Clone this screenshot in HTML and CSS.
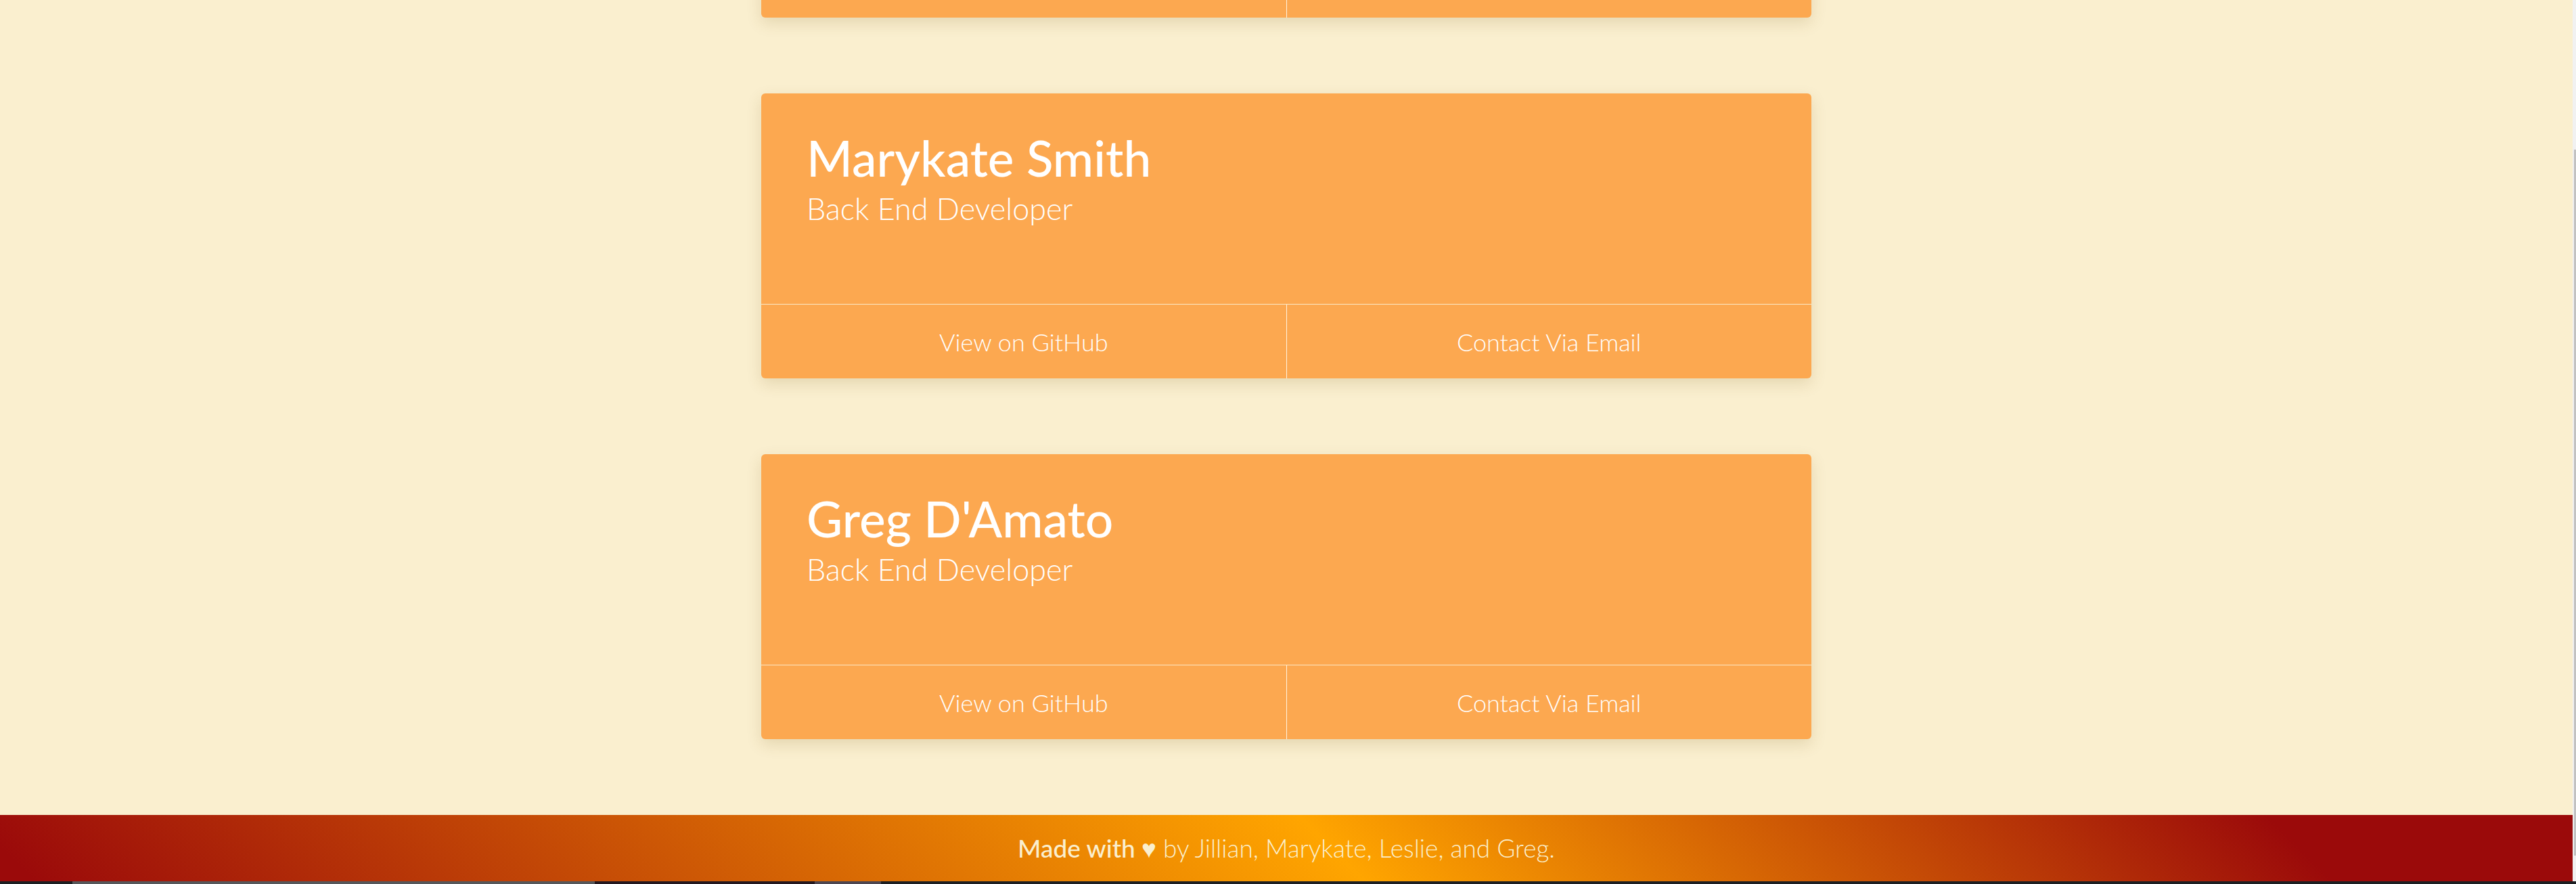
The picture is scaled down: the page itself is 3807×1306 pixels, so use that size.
FILE: index.html
```html
<!DOCTYPE html>
<html lang="en">
<head>
<meta charset="utf-8">
<title>Team</title>
<link rel="stylesheet" href="styles.css">
</head>
<body>
  <div class="viewport">
    <div class="page">
      <main class="cards">
        <section class="card">
          <div class="card-body">
            <h2 class="name">Leslie Example</h2>
            <p class="role">Front End Developer</p>
          </div>
          <div class="card-actions">
            <a class="action" href="#">View on GitHub</a>
            <a class="action" href="#">Contact Via Email</a>
          </div>
        </section>
        <section class="card">
          <div class="card-body">
            <h2 class="name">Marykate Smith</h2>
            <p class="role">Back End Developer</p>
          </div>
          <div class="card-actions">
            <a class="action" href="#">View on GitHub</a>
            <a class="action" href="#">Contact Via Email</a>
          </div>
        </section>
        <section class="card">
          <div class="card-body">
            <h2 class="name">Greg D'Amato</h2>
            <p class="role">Back End Developer</p>
          </div>
          <div class="card-actions">
            <a class="action" href="#">View on GitHub</a>
            <a class="action" href="#">Contact Via Email</a>
          </div>
        </section>
      </main>
      <footer class="footer">
        <p class="footer-text"><strong class="made">Made with ♥</strong> by Jillian, Marykate, Leslie, and Greg.</p>
      </footer>
    </div>
    <div class="scrollbar"><div class="thumb"></div></div>
  </div>
  <div class="taskbar">
    <span class="seg seg-a"></span>
    <span class="seg seg-gap"></span>
    <span class="seg seg-b"></span>
    <span class="seg seg-rest"></span>
  </div>
</body>
</html>
```
FILE: styles.css
```css
* { box-sizing: border-box; }
html, body { margin: 0; padding: 0; }
body {
  background: #faefcf;
  font-family: "Lato", "Open Sans", sans-serif;
  overflow: hidden;
  height: 1306px;
}
.viewport {
  display: flex;
  height: 1302px;
  overflow: hidden;
}
.page {
  flex: 1;
  display: flex;
  flex-direction: column;
  overflow: hidden;
}
.cards {
  display: flex;
  flex-direction: column;
  align-items: center;
  gap: 112px;
  margin-top: -395px;
  padding-bottom: 112px;
}
.card {
  width: 1552px;
  height: 421px;
  background: #fca850;
  border-radius: 6px;
  box-shadow: 0 8px 22px rgba(120, 90, 20, 0.16);
  display: flex;
  flex-direction: column;
  overflow: hidden;
}
.card-body {
  height: 311px;
  padding: 55px 67px 0;
  color: #fff;
}
.name {
  margin: 0;
  font-size: 73px;
  line-height: 80px;
  font-weight: 500;
}
.role {
  margin: 13px 0 0;
  font-size: 45px;
  line-height: 45px;
  font-weight: 300;
}
.card-actions {
  flex: 1;
  display: flex;
  border-top: 1px solid #fbe8c6;
}
.action {
  flex: 1;
  display: flex;
  align-items: center;
  justify-content: center;
  color: #fff;
  text-decoration: none;
  font-size: 36px;
  font-weight: 300;
  padding-top: 1px;
}
.action + .action {
  border-left: 1px solid #fff3e0;
}
.footer {
  height: 98px;
  flex-shrink: 0;
  background: linear-gradient(45deg, #9b0a0a 1.3%, #ffa500 51.7%, #9b0a0a 88.4%);
  display: flex;
  align-items: center;
  justify-content: center;
}
.footer-text {
  margin: 0;
  color: #faefcf;
  font-size: 37px;
  font-weight: 300;
}
.made { font-weight: 500; }
.scrollbar {
  width: 5px;
  flex-shrink: 0;
  background: #f1f1f1;
  padding-top: 221px;
  padding-bottom: 38px;
  display: flex;
  justify-content: flex-end;
}
.thumb {
  width: 3px;
  height: 100%;
  background: #c1c1c1;
}
.taskbar {
  height: 4px;
  display: flex;
  background: #1d1f22;
}
.seg { display: block; height: 100%; }
.seg-a { width: 107px; }
.seg-gap { width: 772px; background: #56575a; }
.seg-b { width: 325px; background: #24181f; }
.seg-rest { width: 98px; background: #4d4650; }
```
